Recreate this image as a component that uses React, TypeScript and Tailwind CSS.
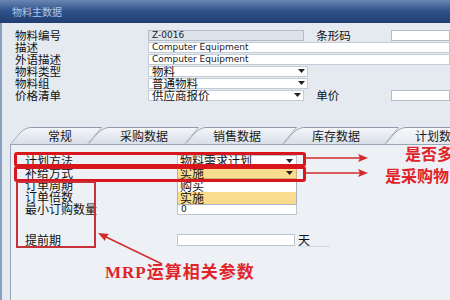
import React from "react";

const CJK = "font-['Noto_Sans_CJK_SC','DejaVu_Sans',sans-serif]";
const LAT = "font-['DejaVu_Sans','Noto_Sans_CJK_SC',sans-serif]";

function Arrow() {
  return (
    <svg width="7" height="4" viewBox="0 0 7 4" className="shrink-0">
      <path d="M0 0 L7 0 L3.5 4 Z" fill="#222" />
    </svg>
  );
}

function HeaderRow({ children, label }: { children: React.ReactNode; label: string }) {
  return (
    <div className="flex h-[12px] items-center">
      <div className={`w-[133px] shrink-0 text-[11.5px] leading-[12px] text-[#111] ${CJK}`}>{label}</div>
      {children}
    </div>
  );
}

function Tab({ label, w, pl, active }: { label: string; w: string; pl: string; active?: boolean }) {
  return (
    <div className={`relative h-[17px] shrink-0 ${w}`}>
      <div
        className={`absolute inset-0 origin-bottom-left -skew-x-[40deg] rounded-tl-[7px] border border-b-0 border-[#8e9bad] ${
          active ? "bg-gradient-to-b from-[#f7f9fb] to-[#e6ebf1]" : "bg-gradient-to-b from-[#f4f6f9] to-[#d8dfe8]"
        }`}
      />
      <div className={`relative flex h-full items-center ${pl} text-[12px] leading-[12px] text-[#1a1a1a] ${CJK}`}>{label}</div>
    </div>
  );
}

export default function App() {
  return (
    <div className={`relative h-[300px] w-[450px] overflow-hidden bg-[#e5eaf1] ${CJK}`}>
      {/* title bar */}
      <div className="flex h-[23px] items-center bg-gradient-to-b from-[#6a86b2] via-[#2f5189] to-[#1f3d70] pl-[12px]">
        <span className="text-[10px] leading-[10px] text-[#b4c8e6]">物料主数据</span>
      </div>
      <div className="flex h-[277px] flex-col border-l-[2px] border-[#8aa0c0]">
        {/* header rows */}
        <div className="flex flex-col pl-[13px] pt-[6px]">
          <HeaderRow label="物料编号">
            <div className={`flex h-[11px] w-[160px] items-center border border-[#b3bdca] bg-[#dce3eb] px-[3px] text-[9px] leading-[9px] text-[#222] ${LAT}`}>Z-0016</div>
            <div className="w-[12px]" />
            <div className="w-[77px] text-[11.5px] leading-[12px] text-[#111]">条形码</div>
            <div className="h-[11px] w-[60px] border border-[#b3bdca] bg-white" />
          </HeaderRow>
          <HeaderRow label="描述">
            <div className={`flex h-[11px] w-[310px] items-center border border-[#c3ccd6] bg-white px-[3px] text-[9px] leading-[9px] text-[#222] ${LAT}`}>Computer Equipment</div>
          </HeaderRow>
          <HeaderRow label="外语描述">
            <div className={`flex h-[11px] w-[310px] items-center border border-[#c3ccd6] bg-white px-[3px] text-[9px] leading-[9px] text-[#222] ${LAT}`}>Computer Equipment</div>
          </HeaderRow>
          <HeaderRow label="物料类型">
            <div className="flex h-[11px] w-[160px] items-center justify-between border border-[#c3ccd6] bg-white pl-[3px] pr-[2px] text-[11.5px] leading-[11px] text-[#111]">
              物料
              <Arrow />
            </div>
          </HeaderRow>
          <HeaderRow label="物料组">
            <div className="flex h-[11px] w-[160px] items-center justify-between border border-[#c3ccd6] bg-white pl-[3px] pr-[2px] text-[11.5px] leading-[11px] text-[#111]">
              普通物料
              <Arrow />
            </div>
          </HeaderRow>
          <HeaderRow label="价格清单">
            <div className="flex h-[11px] w-[160px] items-center justify-between border border-[#c3ccd6] bg-white pl-[3px] pr-[2px] text-[11.5px] leading-[11px] text-[#111]">
              供应商报价
              <Arrow />
            </div>
            <div className="w-[12px]" />
            <div className="w-[77px] text-[11.5px] leading-[12px] text-[#111]">单价</div>
            <div className="h-[11px] w-[60px] border border-[#b3bdca] bg-white" />
          </HeaderRow>
        </div>

        {/* tabs */}
        <div className="mt-[26px] flex pl-[8px]">
          <Tab label="常规" w="w-[78px]" pl="pl-[38px]" />
          <Tab label="采购数据" w="w-[97px]" pl="pl-[32px]" />
          <Tab label="销售数据" w="w-[98px]" pl="pl-[28px]" />
          <Tab label="库存数据" w="w-[102px]" pl="pl-[29px]" />
          <Tab label="计划数据" w="w-[100px]" pl="pl-[30px]" active />
        </div>

        {/* panel */}
        <div className="relative ml-[8px] flex flex-1 flex-col border-l border-t border-[#9aa6b6] bg-[#edf1f6] pl-[14px] pt-[10px]">
          <div className="flex h-[12px] items-center">
            <div className="w-[152px] text-[12px] leading-[12px] text-[#111]">计划方法</div>
            <div className="flex h-[12px] w-[120px] items-center justify-between border border-[#bcc5d0] bg-white pl-[2px] pr-[3px] text-[12px] leading-[12px] text-[#111]">
              物料需求计划
              <Arrow />
            </div>
          </div>
          <div className="flex h-[12px] items-center">
            <div className="w-[152px] text-[12px] leading-[12px] text-[#111]">补给方式</div>
            <div className="flex h-[12px] w-[120px] items-center justify-between border border-[#c9b47a] bg-[#f9dc8d] pl-[2px] pr-[3px] text-[12px] leading-[12px] text-[#111]">
              实施
              <Arrow />
            </div>
          </div>
          <div className="flex h-[12px] items-center">
            <div className="w-[152px] text-[12px] leading-[12px] text-[#111]">订单周期</div>
          </div>
          <div className="flex h-[12px] items-center">
            <div className="w-[152px] text-[12px] leading-[12px] text-[#111]">订单倍数</div>
          </div>
          <div className="flex h-[12px] items-center">
            <div className="w-[152px] text-[12px] leading-[12px] text-[#111]">最小订购数量</div>
            <div className={`flex h-[12px] w-[120px] items-center border border-[#bcc5d0] bg-white pl-[3px] text-[9px] leading-[9px] text-[#111] ${LAT}`}>0</div>
          </div>
          <div className="mt-[19px] flex h-[12px] items-center">
            <div className="w-[152px] text-[12px] leading-[12px] text-[#111]">提前期</div>
            <div className="h-[12px] w-[118px] border border-[#bcc5d0] bg-white" />
            <div className="ml-[3px] border-b border-[#d3d9e1] pr-[20px] text-[12px] leading-[12px] text-[#111]">天</div>
          </div>

          {/* dropdown list */}
          <div className="absolute left-[166px] top-[34px] flex w-[120px] flex-col border border-[#a9b4c1] bg-white">
            <div className="h-[12px] pl-[2px] text-[12px] leading-[12px] text-[#111]">购买</div>
            <div className="h-[12px] bg-[#f9dc8d] pl-[2px] text-[12px] leading-[12px] text-[#111]">实施</div>
          </div>
        </div>
      </div>

      {/* annotations */}
      <div className="pointer-events-none absolute left-[14px] top-[152px] h-[15px] w-[292px] rounded-[3px] border-[3px] border-[#d8161c]" />
      <div className="pointer-events-none absolute left-[14px] top-[166px] h-[16px] w-[292px] rounded-[3px] border-[3px] border-[#d8161c]" />
      <div className="pointer-events-none absolute left-[16px] top-[181px] h-[67px] w-[80px] border-2 border-[#c8303a]" />
      <svg className="pointer-events-none absolute left-0 top-0" width="450" height="300">
        <g stroke="#d22a2a" strokeWidth="1.6" fill="#d22a2a">
          <line x1="306" y1="158" x2="362" y2="158" />
          <path d="M368 158 L358 154 L360 158 L358 162 Z" stroke="none" />
          <line x1="306" y1="173" x2="362" y2="173" />
          <path d="M368 173 L358 169 L360 173 L358 177 Z" stroke="none" />
          <line x1="104" y1="236" x2="162" y2="264" strokeWidth="1.4" />
          <path d="M98 233 L109 234 L106 237 L105 241 Z" stroke="none" />
        </g>
      </svg>
      <div className="absolute left-[405px] top-[144px] whitespace-nowrap text-[16px] font-bold leading-[18px] text-[#e0242a]">是否多</div>
      <div className="absolute left-[385px] top-[166px] whitespace-nowrap text-[16px] font-bold leading-[18px] text-[#e0242a]">是采购物</div>
      <div className="absolute left-[105px] top-[261px] whitespace-nowrap text-[17px] font-bold leading-[20px] tracking-[1px] text-[#e0242a]">
        <span className="font-['Liberation_Serif',serif]">MRP</span>运算相关参数
      </div>
    </div>
  );
}
